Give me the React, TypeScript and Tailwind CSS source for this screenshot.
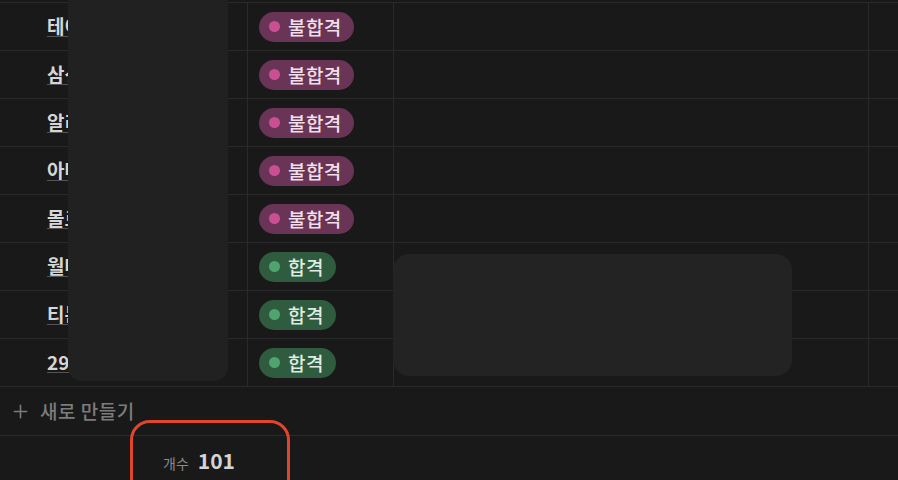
import { Plus } from 'lucide-react'

type Row = { name: string; passed: boolean }

const ROWS: Row[] = [
  { name: '테이블', passed: false },
  { name: '삼성전자', passed: false },
  { name: '알리바바', passed: false },
  { name: '아마존', passed: false },
  { name: '몰로코', passed: false },
  { name: '월마트', passed: true },
  { name: '티몬', passed: true },
  { name: '29CM', passed: true },
]

const FONT = { fontFamily: '"Noto Sans CJK KR", "Noto Sans", sans-serif' }

function StatusPill({ passed }: { passed: boolean }) {
  return (
    <span
      className={`inline-flex items-center h-[30px] rounded-full pl-[10px] pr-[12px] gap-[8px] text-[19px] tracking-[0.4px] font-medium leading-none ${
        passed ? 'bg-[#2f5b3e] text-[#dfeae2]' : 'bg-[#693455] text-[#eedfe8]'
      }`}
    >
      <span className={`w-[11px] h-[11px] rounded-full ${passed ? 'bg-[#4fa56d]' : 'bg-[#cc4f94]'}`} />
      {passed ? '합격' : '불합격'}
    </span>
  )
}

function TableRow({ row }: { row: Row }) {
  return (
    <div className="flex h-[48px] border-b border-[#2a2a2a]">
      <div className="w-[248px] border-r border-[#2a2a2a] flex items-center pl-[47px] overflow-hidden">
        <span className="text-[19px] font-bold text-[#d6d6d6] leading-[20px] border-b border-[#555] whitespace-nowrap">
          {row.name}
        </span>
      </div>
      <div className="w-[146px] border-r border-[#2a2a2a] flex items-center pl-[11px]">
        <StatusPill passed={row.passed} />
      </div>
      <div className="w-[475px] border-r border-[#2a2a2a]" />
      <div className="flex-1" />
    </div>
  )
}

export default function App() {
  return (
    <div className="relative w-[898px] h-[480px] overflow-hidden bg-[#191919]" style={FONT}>
      <div className="h-[3px] border-b border-[#2a2a2a]" />
      {ROWS.map((r) => (
        <TableRow key={r.name} row={r} />
      ))}

      {/* new row */}
      <div className="h-[49px] border-b border-[#2a2a2a] flex items-center pl-[10px] gap-[9px] text-[#7c7c7c]">
        <Plus className="w-[21px] h-[21px]" strokeWidth={1.8} />
        <span className="text-[19px] tracking-[0.5px] font-medium">새로 만들기</span>
      </div>

      {/* footer count */}
      <div className="flex items-baseline pl-[163px] pt-[9px] gap-[9px]">
        <span className="text-[14px] text-[#8a8a8a]">개수</span>
        <span className="text-[21px] font-semibold text-[#d4d4d4]">101</span>
      </div>

      {/* overlays */}
      <div className="absolute left-[68px] top-0 w-[160px] h-[381px] bg-[#212121] rounded-b-[14px]" />
      <div className="absolute left-[393px] top-[254px] w-[399px] h-[122px] bg-[#232323] rounded-[16px]" />
      <div className="absolute left-[130px] top-[420px] w-[160px] h-[90px] border-[3px] border-[#e2452d] rounded-[20px]" />
    </div>
  )
}
